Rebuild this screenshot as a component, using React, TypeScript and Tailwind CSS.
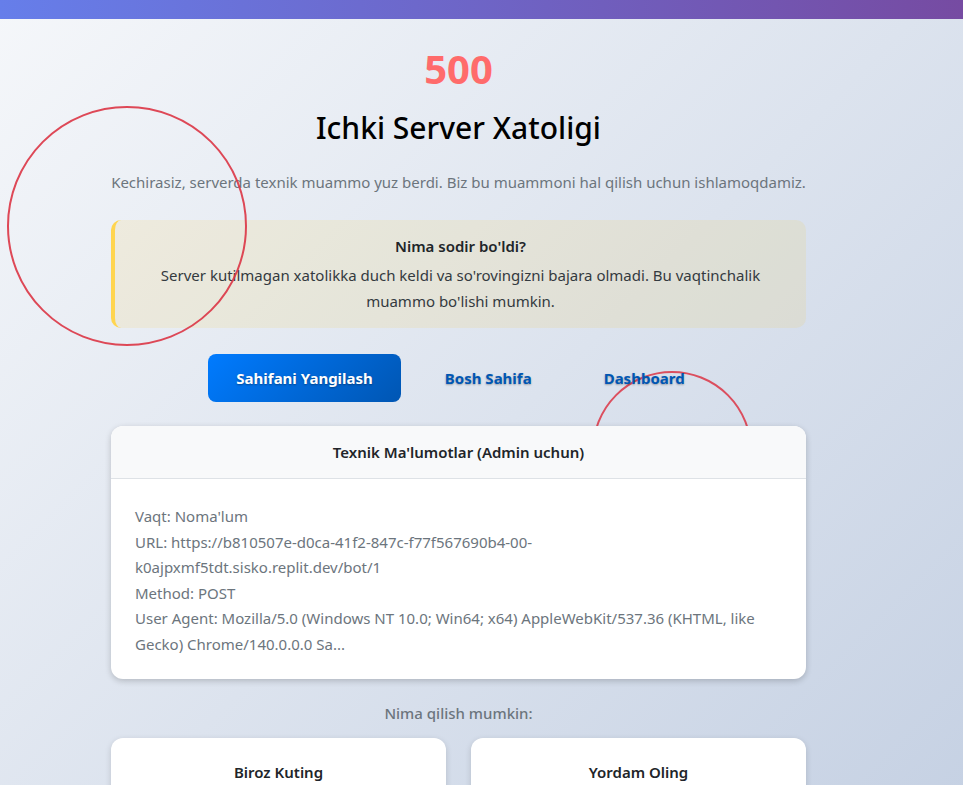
import React from "react";

const font = { fontFamily: '"Noto Sans", "Open Sans", sans-serif' };

const techLines = [
  "Vaqt: Noma'lum",
  "URL: https://b810507e-d0ca-41f2-847c-f77f567690b4-00-",
  "k0ajpxmf5tdt.sisko.replit.dev/bot/1",
  "Method: POST",
  "User Agent: Mozilla/5.0 (Windows NT 10.0; Win64; x64) AppleWebKit/537.36 (KHTML, like Gecko) Chrome/140.0.0.0 Sa...",
];

const tips = [
  ["Biroz Kuting", "Bir necha daqiqadan so'ng sahifani qayta yuklang."],
  ["Yordam Oling", "Muammo davom etsa, administrator bilan bog'laning."],
];

export default function App() {
  return (
    <div
      style={font}
      className="relative min-h-screen overflow-hidden bg-[linear-gradient(135deg,#f5f7fa_0%,#c3cfe2_100%)] text-[#212529]"
    >
      <div className="h-[19px] w-full bg-[linear-gradient(90deg,#667eea_0%,#764ba2_100%)]" />

      {/* decorative rings */}
      <span
        aria-hidden="true"
        className="absolute left-[7px] top-[106px] z-20 size-[240px] rounded-full border-2 border-[#dc3545]/90"
      />
      <span
        aria-hidden="true"
        className="absolute left-[592px] top-[371px] z-0 size-[160px] rounded-full border-2 border-[#dc3545]/85"
      />

      <main className="relative ml-[111px] w-[695px] pb-10 text-center">
        <h1 className="relative z-10 mt-[27px] text-[40px] font-bold leading-[46px] text-[#ff6b6b]">500</h1>
        <h2 className="relative z-10 mt-[16px] text-[30px] font-medium leading-[40px] text-black">
          Ichki Server Xatoligi
        </h2>
        <p className="relative z-10 mt-[22px] text-[15px] leading-6 text-[#6c757d]">
          Kechirasiz, serverda texnik muammo yuz berdi. Biz bu muammoni hal qilish uchun ishlamoqdamiz.
        </p>

        <div className="relative z-10 mt-[26px] rounded-[10px] border-l-4 border-[#ffd54f] bg-[#ffc107]/10 px-6 py-[14px]">
          <h3 className="text-[15px] font-semibold leading-6 text-[#212529]">Nima sodir bo'ldi?</h3>
          <p className="mt-[4px] text-[15px] leading-[26px] text-[#343a40]">
            Server kutilmagan xatolikka duch keldi va so'rovingizni bajara olmadi. Bu vaqtinchalik muammo
            bo'lishi mumkin.
          </p>
        </div>

        <div className="relative z-10 mt-[26px] flex justify-center gap-3 pl-[4px]">
          <button className="h-[48px] rounded-lg bg-[linear-gradient(135deg,#007bff_0%,#0056b3_100%)] px-7 text-[15px] font-bold text-white [text-shadow:0_1px_2px_rgba(0,0,0,0.35)]">
            Sahifani Yangilash
          </button>
          <button className="h-[48px] rounded-lg px-8 text-[15px] font-bold text-[#0056b3] [text-shadow:0_1px_2px_rgba(0,0,0,0.3)]">
            Bosh Sahifa
          </button>
          <button className="h-[48px] rounded-lg px-7 text-[15px] font-bold text-[#0056b3] [text-shadow:0_1px_2px_rgba(0,0,0,0.3)]">
            Dashboard
          </button>
        </div>

        <section className="relative z-10 mt-[24px] overflow-hidden rounded-xl bg-white text-left shadow-[0_2px_6px_rgba(0,0,0,0.2)]">
          <div className="flex h-[53px] items-center justify-center border-b border-[#dee2e6] bg-[#f8f9fa]">
            <h3 className="text-[15px] font-semibold text-[#212529]">Texnik Ma'lumotlar (Admin uchun)</h3>
          </div>
          <div className="px-6 pb-[22px] pt-[25px] text-[15px] leading-[25.5px] text-[#6c757d]">
            {techLines.map((line) => (
              <div key={line} className="break-words">
                {line}
              </div>
            ))}
          </div>
        </section>

        <p className="relative z-10 mt-[22px] text-[15px] font-medium leading-6 text-[#6c757d]">Nima qilish mumkin:</p>

        <div className="relative z-10 mt-[13px] grid grid-cols-2 gap-[25px]">
          {tips.map(([title, text]) => (
            <article key={title} className="rounded-xl bg-white px-5 pb-5 pt-[22px] shadow-[0_2px_6px_rgba(0,0,0,0.15)]">
              <h4 className="text-[15px] font-semibold leading-6 text-[#212529]">{title}</h4>
              <p className="mt-2 text-sm leading-6 text-[#6c757d]">{text}</p>
            </article>
          ))}
        </div>
      </main>
    </div>
  );
}
